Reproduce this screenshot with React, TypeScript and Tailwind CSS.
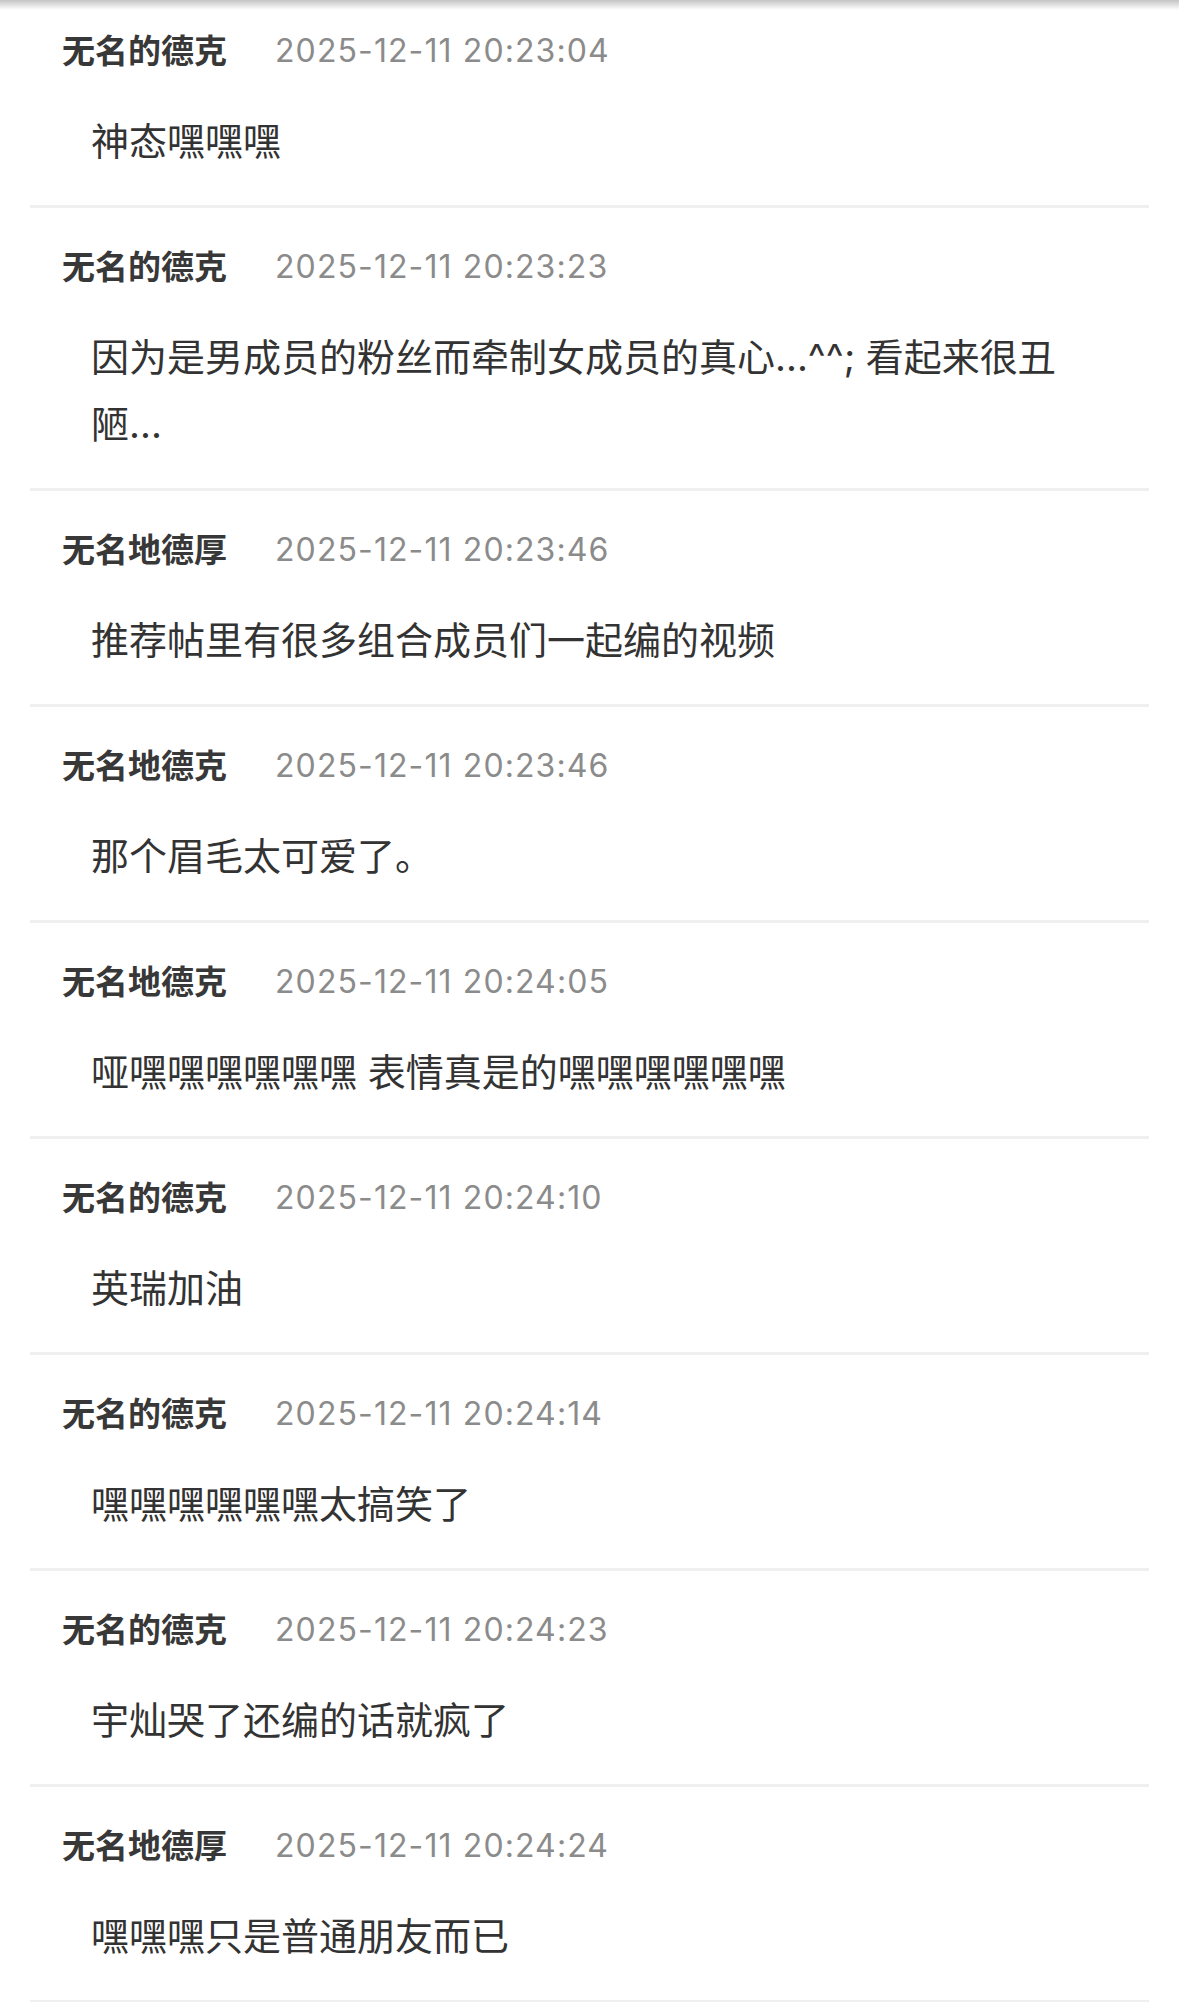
const comments = [
  { name: '无名的德克', time: '2025-12-11 20:23:04', text: '神态嘿嘿嘿' },
  { name: '无名的德克', time: '2025-12-11 20:23:23', text: '因为是男成员的粉丝而牵制女成员的真心...^^; 看起来很丑陋...' },
  { name: '无名地德厚', time: '2025-12-11 20:23:46', text: '推荐帖里有很多组合成员们一起编的视频' },
  { name: '无名地德克', time: '2025-12-11 20:23:46', text: '那个眉毛太可爱了。' },
  { name: '无名地德克', time: '2025-12-11 20:24:05', text: '哑嘿嘿嘿嘿嘿嘿 表情真是的嘿嘿嘿嘿嘿嘿' },
  { name: '无名的德克', time: '2025-12-11 20:24:10', text: '英瑞加油' },
  { name: '无名的德克', time: '2025-12-11 20:24:14', text: '嘿嘿嘿嘿嘿嘿太搞笑了' },
  { name: '无名的德克', time: '2025-12-11 20:24:23', text: '宇灿哭了还编的话就疯了' },
  { name: '无名地德厚', time: '2025-12-11 20:24:24', text: '嘿嘿嘿只是普通朋友而已' },
];

const font = { fontFamily: 'Inter, "Noto Sans CJK SC", sans-serif' };

const CommentRow = ({ c, first }: { c: (typeof comments)[number]; first: boolean }) => (
  <div className={`${first ? 'pt-[31px]' : 'pt-[39px]'} border-b-[3px] border-[#efefef]`}>
    <div className="flex items-center h-[40px] pl-[32px]">
      <span className="text-[33px] font-bold text-[#383838] leading-none">{c.name}</span>
      <span className="ml-[48px] text-[32px] tracking-[1.1px] text-[#8b8b8b] leading-none">{c.time}</span>
    </div>
    <p className="mt-[37px] pb-[30px] pl-[61px] pr-[70px] text-[38px] leading-[67px] text-[#333333]">
      {c.text}
    </p>
  </div>
);

export default function App() {
  return (
    <div className="relative min-h-[2002px] bg-white overflow-hidden" style={font}>
      <div className="absolute top-0 left-0 right-0 h-[10px] bg-gradient-to-b from-[#c4c4c4] to-white/0" />
      <div className="mx-[30px]">
        {comments.map((c, i) => (
          <CommentRow key={i} c={c} first={i === 0} />
        ))}
      </div>
    </div>
  );
}
